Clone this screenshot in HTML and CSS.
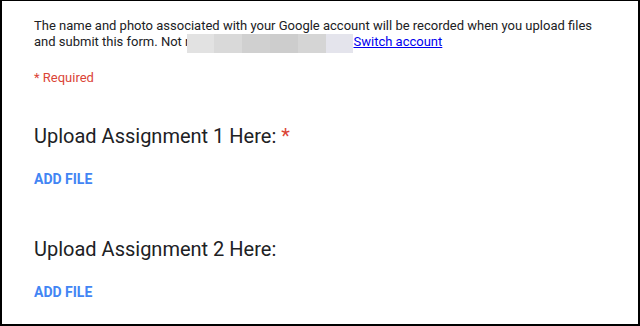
FILE: index.html
```html
<!DOCTYPE html>
<html>
<head>
<meta charset="utf-8">
<link rel="stylesheet" href="styles.css">
</head>
<body>
<div class="frame">
  <p class="notice">The name and photo associated with your Google account will be recorded when you upload files and submit this form. Not r<span class="redact"><span class="r1"></span><span class="r2"></span><span class="r3"></span><span class="r4"></span><span class="r5"></span><span class="r6"></span></span><a href="#" class="switch">Switch account</a></p>
  <p class="required">* Required</p>
  <div class="question">
    <h2 class="qtitle">Upload Assignment 1 Here: <span class="star">*</span></h2>
    <div class="addfile">ADD FILE</div>
  </div>
  <div class="question">
    <h2 class="qtitle">Upload Assignment 2 Here:</h2>
    <div class="addfile">ADD FILE</div>
  </div>
</div>
</body>
</html>
```

FILE: styles.css
```css
html, body {
  margin: 0;
  padding: 0;
  background: #fff;
}
.frame {
  box-sizing: border-box;
  width: 640px;
  height: 326px;
  border-top: 1px solid #000;
  border-left: 2px solid #000;
  border-right: 2px solid #000;
  border-bottom: 2px solid #000;
  padding: 17px 0 0 32px;
  font-family: Roboto, "Noto Sans", sans-serif;
  overflow: hidden;
}
.notice {
  margin: 0;
  font-size: 13px;
  line-height: 16px;
  color: #202124;
  width: 570px;
}
.redact {
  display: inline-flex;
  width: 167px;
  height: 19px;
  margin-left: -3px;
  vertical-align: -7px;
}
.redact span { flex: 1; }
.r1 { background: #e2e2e2; }
.r2 { background: #d9d9d9; }
.r3 { background: #d0d0d0; }
.r4 { background: #cdcdcd; }
.r5 { background: #d5d5d5; }
.r6 { background: #e4e4ec; }
.switch {
  color: #0000ee;
  text-decoration: underline;
}
.required {
  margin: 17px 0 0;
  font-size: 13px;
  line-height: 16px;
  color: #db4437;
}
.question {
  margin-top: 38px;
}
.question + .question {
  margin-top: 50px;
}
.qtitle {
  margin: 0;
  font-size: 20px;
  font-weight: 400;
  line-height: 24px;
  color: #202124;
}
.star {
  color: #db4437;
}
.addfile {
  margin-top: 23px;
  font-size: 14px;
  font-weight: 700;
  line-height: 16px;
  color: #4285f4;
}
```
